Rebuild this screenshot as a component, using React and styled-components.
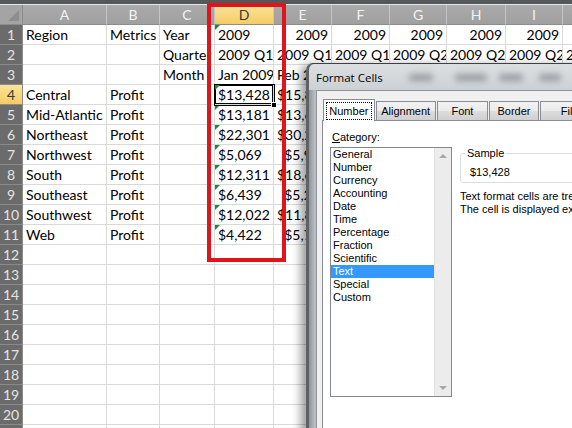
import React from "react";
import styled, { createGlobalStyle, css } from "styled-components";

const GlobalStyle = createGlobalStyle`
  html, body { margin: 0; padding: 0; background: #fff; }
  * { box-sizing: border-box; }
`;

const COLS = [23, 84, 53, 55, 59, 58, 58, 57, 59, 57, 80];
const LETTERS = ["A", "B", "C", "D", "E", "F", "G", "H", "I", "J"];

const regionData = [
  ["Central", "$13,428", "$15,842"],
  ["Mid-Atlantic", "$13,181", "$13,654"],
  ["Northeast", "$22,301", "$30,218"],
  ["Northwest", "$5,069", "$5,947"],
  ["South", "$12,311", "$18,631"],
  ["Southeast", "$6,439", "$5,236"],
  ["Southwest", "$12,022", "$11,873"],
  ["Web", "$4,422", "$5,712"],
];

const r = (t) => ({ t, right: true });

// cells hidden behind the dialog are left empty
const grid = [
  ["Region", "Metrics", "Year", { t: "2009", flag: true }, r("2009"), r("2009"), r("2009"), r("2009"), r("2009"), null],
  [null, null, "Quarter", "2009 Q1", "2009 Q1", "2009 Q1", "2009 Q2", "2009 Q2", "2009 Q2", "2009 Q3"],
  [null, null, "Month", "Jan 2009", "Feb 2009", null, null, null, null, null],
  ...regionData.map(([name, d, e], i) => [
    name,
    "Profit",
    null,
    { t: d, flag: true, selected: i === 0 },
    r(e),
    null,
    null,
    null,
    null,
    null,
  ]),
];
while (grid.length < 21) grid.push(Array(10).fill(null));

const categories = [
  "General",
  "Number",
  "Currency",
  "Accounting",
  "Date",
  "Time",
  "Percentage",
  "Fraction",
  "Scientific",
  "Text",
  "Special",
  "Custom",
];

const tabs = [
  { label: "Number", w: 55, active: true },
  { label: "Alignment", w: 64 },
  { label: "Font", w: 55 },
  { label: "Border", w: 53 },
  { label: "Fill", w: 60 },
];

// blurred shapes of the sheet seen through the glass title bar
const blobs = [
  { ml: 26, w: 24 },
  { ml: 22, w: 32 },
  { ml: 12, w: 24 },
  { ml: 16, w: 22 },
];

function App() {
  return (
    <>
      <GlobalStyle />
      <Page>
        <TopBar />
        <Sheet>
          <Corner />
          {LETTERS.map((l) => (
            <ColHead key={l} $active={l === "D"}>
              {l}
            </ColHead>
          ))}
          {grid.map((cells, i) => (
            <React.Fragment key={i}>
              <RowHead $active={i === 3}>{i + 1}</RowHead>
              {cells.map((raw, j) => {
                const c = typeof raw === "string" ? { t: raw } : raw || {};
                return (
                  <Cell key={j} $flag={c.flag} $selected={c.selected}>
                    <CellText $right={c.right}>{c.t}</CellText>
                    {c.selected && <FillHandle />}
                  </Cell>
                );
              })}
            </React.Fragment>
          ))}
        </Sheet>

        <RedFrame />

        <Dialog>
          <TitleBar>
            <Title>Format Cells</Title>
            {blobs.map((b, i) => (
              <Blob key={i} $ml={b.ml} $w={b.w} />
            ))}
          </TitleBar>
          <Client>
            <TabRow>
              {tabs.map((t) => (
                <Tab key={t.label} $w={t.w} $active={t.active}>
                  {t.active ? <Focus>{t.label}</Focus> : t.label}
                </Tab>
              ))}
            </TabRow>
            <TabPanel>
              <Label>
                <u>C</u>ategory:
              </Label>
              <ListBox>
                <Items>
                  {categories.map((c) => (
                    <Item key={c} $selected={c === "Text"}>
                      {c}
                    </Item>
                  ))}
                </Items>
                <ScrollBar>
                  <Arrow $dir="up" />
                  <Arrow $dir="down" />
                </ScrollBar>
              </ListBox>
              <RightCol>
                <Group>
                  <Legend>Sample</Legend>
                  <SampleValue>$13,428</SampleValue>
                </Group>
                <Desc>
                  Text format cells are treated as text even when a number is in the cell.
                  <br />
                  The cell is displayed exactly as entered.
                </Desc>
              </RightCol>
            </TabPanel>
          </Client>
        </Dialog>
      </Page>
    </>
  );
}

const Page = styled.div`
  position: relative;
  width: 572px;
  height: 428px;
  overflow: hidden;
  background: #fff;
  font-family: Lato, "Liberation Sans", sans-serif;
`;

const TopBar = styled.div`
  height: 5px;
  background: #55585b;
  border-bottom: 1px solid #e6e6e6;
`;

const Sheet = styled.div`
  display: grid;
  grid-template-columns: ${COLS.map((w) => w + "px").join(" ")};
  grid-auto-rows: 20px;
  font-size: 14px;
  color: #000;
`;

const Corner = styled.div`
  position: relative;
  background: #a4a4a4;
  border-right: 1px solid #8c8c8c;
  border-bottom: 1px solid #8c8c8c;
  &::after {
    content: "";
    position: absolute;
    right: 3px;
    bottom: 3px;
    border-left: 11px solid transparent;
    border-bottom: 11px solid #8d8d8d;
  }
`;

const activeHead = css`
  background: linear-gradient(#fbe39a, #f5cc64);
  color: #3a3a3a;
`;

const ColHead = styled.div`
  display: flex;
  align-items: center;
  justify-content: center;
  background: linear-gradient(#aaaaaa, #a0a0a0);
  color: #f2f2f2;
  border-right: 1px solid #c4c4c4;
  border-bottom: 1px solid #8c8c8c;
  ${(p) => p.$active && activeHead}
`;

const RowHead = styled.div`
  display: flex;
  align-items: center;
  justify-content: center;
  background: #6b6b6b;
  color: #e4e4e4;
  border-right: 1px solid #8c8c8c;
  border-bottom: 1px solid #8a8a8a;
  ${(p) => p.$active && activeHead}
`;

const Cell = styled.div`
  position: relative;
  border-right: 1px solid #d9d9d9;
  border-bottom: 1px solid #d9d9d9;
  ${(p) =>
    p.$flag &&
    css`
      &::before {
        content: "";
        position: absolute;
        top: 0;
        left: 0;
        border-top: 5px solid #1a8a3a;
        border-right: 5px solid transparent;
      }
    `}
  ${(p) =>
    p.$selected &&
    css`
      z-index: 2;
      box-shadow: 0 0 0 1px #000, inset 0 0 0 1px #000;
    `}
`;

const CellText = styled.div`
  height: 100%;
  padding: 1px 3px 0;
  line-height: 18px;
  white-space: nowrap;
  overflow: hidden;
  text-align: ${(p) => (p.$right ? "right" : "left")};
`;

const FillHandle = styled.div`
  position: absolute;
  right: -4px;
  bottom: -4px;
  width: 6px;
  height: 6px;
  background: #000;
  border: 1px solid #fff;
`;

const RedFrame = styled.div`
  position: absolute;
  left: 207px;
  top: 3px;
  width: 79px;
  height: 259px;
  border: 4px solid #e0141b;
  pointer-events: none;
`;

const Dialog = styled.div`
  position: absolute;
  left: 306px;
  top: 63px;
  width: 300px;
  height: 400px;
  display: flex;
  flex-direction: column;
  padding: 0 8px 8px 7px;
  border: 1px solid #3d4145;
  border-left: 3px solid #5e6266;
  border-radius: 7px 7px 0 0;
  background: linear-gradient(90deg, #8f9499 0, #b9bfc4 6px, #c8cdd1 100%);
  box-shadow: -5px 2px 10px rgba(0, 0, 0, 0.4);
  font-family: "Liberation Sans", Arial, sans-serif;
  font-size: 11px;
  color: #000;
`;

const TitleBar = styled.div`
  height: 26px;
  display: flex;
  align-items: center;
  white-space: nowrap;
  background: linear-gradient(#dcdfe2, #ccd1d5);
  margin: 0 -8px 0 -7px;
  padding-left: 7px;
  border-radius: 6px 6px 0 0;
`;

const Title = styled.span`
  font-family: "Open Sans", "Liberation Sans", sans-serif;
  font-size: 11.5px;
  color: #000;
`;

const Blob = styled.div`
  flex: none;
  margin-left: ${(p) => p.$ml}px;
  width: ${(p) => p.$w}px;
  height: 7px;
  border-radius: 3px;
  background: #5d6266;
  opacity: 0.5;
  filter: blur(3px);
`;

const Client = styled.div`
  flex: 1;
  display: flex;
  flex-direction: column;
  background: #f0f0f0;
  border: 1px solid #8d9296;
  padding: 8px 0 0 5px;
`;

const TabRow = styled.div`
  position: relative;
  z-index: 1;
  height: 22px;
  margin-bottom: -1px;
  padding-left: 1px;
  display: flex;
  align-items: flex-end;
  gap: 1px;
`;

const Tab = styled.div`
  width: ${(p) => p.$w}px;
  height: 19px;
  margin-bottom: 1px;
  display: flex;
  align-items: center;
  justify-content: center;
  border: 1px solid #898c95;
  border-bottom: none;
  background: linear-gradient(#f2f2f2 0, #ebebeb 50%, #dddddd 51%, #cfcfcf 100%);
  ${(p) =>
    p.$active &&
    css`
      height: 22px;
      margin-bottom: 0;
      background: #fff;
      padding: 2px 2px 1px;
    `}
`;

const Focus = styled.span`
  flex: 1;
  align-self: stretch;
  display: flex;
  align-items: center;
  justify-content: center;
  border: 1px dotted #000;
`;

const TabPanel = styled.div`
  flex: 1;
  background: #fff;
  border: 1px solid #898c95;
  padding: 10px 0 0 7px;
  display: grid;
  grid-template-columns: 122px 1fr;
  grid-template-rows: 16px auto;
  column-gap: 8px;
  align-content: start;
`;

const Label = styled.div`
  grid-column: 1 / span 2;
  margin-left: 2px;
  line-height: 13px;
`;

const ListBox = styled.div`
  height: 250px;
  display: flex;
  border: 1px solid #828790;
  background: #fff;
`;

const Items = styled.div`
  flex: 1;
`;

const Item = styled.div`
  height: 13px;
  line-height: 13px;
  padding-left: 2px;
  ${(p) =>
    p.$selected &&
    css`
      background: #3399ff;
      color: #fff;
    `}
`;

const ScrollBar = styled.div`
  width: 17px;
  display: flex;
  flex-direction: column;
  justify-content: space-between;
  align-items: center;
  padding: 6px 0 6px;
  background: #ececec;
  border-left: 1px solid #e2e2e2;
`;

const Arrow = styled.div`
  width: 0;
  height: 0;
  border-left: 4px solid transparent;
  border-right: 4px solid transparent;
  ${(p) =>
    p.$dir === "up"
      ? css`
          border-bottom: 4px solid #a8a8a8;
        `
      : css`
          border-top: 4px solid #a8a8a8;
        `}
`;

const RightCol = styled.div`
  display: flex;
  flex-direction: column;
`;

const Group = styled.fieldset`
  margin: 0;
  padding: 6px 4px 3px;
  border: 1px solid #d5dfe5;
  border-radius: 3px;
  min-width: 0;
`;

const Legend = styled.legend`
  padding: 0 2px;
  line-height: 13px;
`;

const SampleValue = styled.div`
  margin-left: 5px;
  line-height: 13px;
`;

const Desc = styled.div`
  margin-top: 7px;
  line-height: 13px;
  white-space: nowrap;
`;

export default App;
